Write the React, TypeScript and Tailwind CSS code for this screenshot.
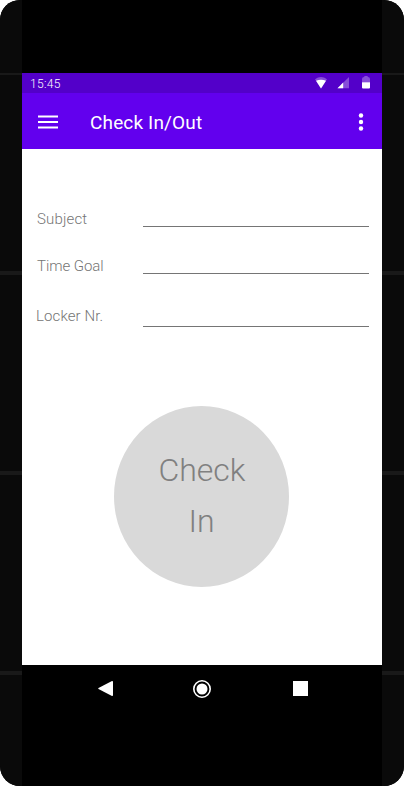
function Rail() {
  return (
    <div className="flex w-[22px] shrink-0 flex-col bg-[#0a0a0a]">
      <div className="mt-[73px] h-[2px] bg-[#191919]" />
      <div className="mt-[196px] h-[4px] bg-[#191919]" />
      <div className="mt-[196px] h-[4px] bg-[#191919]" />
      <div className="mt-[196px] h-[4px] bg-[#191919]" />
    </div>
  );
}

function StatusBar() {
  return (
    <div className="flex h-5 items-center bg-[#5300c9] pr-[11px] pl-2 text-white">
      <span className="pt-[2px] text-[12px] leading-5 font-light tracking-[0.3px]">15:45</span>
      <svg className="ml-auto" width="56" height="20" viewBox="0 0 56 20" fill="#fff">
        <path d="M0 6.2 Q6 1.6 12 6.2 L6 15.5 Z" opacity="0.3" />
        <path d="M1 7.8 Q6 5.6 11 7.8 L6 15.5 Z" />
        <path d="M22.5 15.3 L34 4 V15.3 Z" opacity="0.3" />
        <path d="M22.5 15.3 L28.2 9.6 V15.3 Z" />
        <path d="M47 9.2 V6 Q47 4 49.2 4 L49.5 3 H52.5 L52.8 4 Q55 4 55 6 V9.2 Z" opacity="0.3" />
        <path d="M47 9.2 H55 V14.5 Q55 15.5 54 15.5 H48 Q47 15.5 47 14.5 Z" />
      </svg>
    </div>
  );
}

function AppBar() {
  return (
    <div className="flex h-14 items-center bg-[#6200ee] pt-[2px] pr-[18px] pl-4 text-white">
      <svg width="20" height="14" viewBox="0 0 20 14" fill="#fff">
        <path d="M0 0.4h20v2.2H0zM0 6h20v2H0zM0 11.4h20v2.2H0z" />
      </svg>
      <h1 className="ml-8 pt-px text-[19px] leading-6 font-normal tracking-[0.15px]">Check In/Out</h1>
      <svg className="ml-auto" width="6" height="18" viewBox="0 0 6 18" fill="#fff">
        <circle cx="3" cy="2.5" r="2.2" />
        <circle cx="3" cy="9" r="2.2" />
        <circle cx="3" cy="15.5" r="2.2" />
      </svg>
    </div>
  );
}

export default function App() {
  return (
    <div className="h-[787px] w-[404px] bg-white font-['Roboto',sans-serif]">
      <div className="flex h-[786px] overflow-hidden rounded-[20px] bg-black">
        <Rail />
        <main className="flex w-[360px] flex-col pt-[73px]">
          <StatusBar />
          <AppBar />
          <section className="flex h-[516px] flex-col bg-white text-[15px] leading-5 font-light text-[#757575]">
            <div className="mt-[60px] flex h-[18px] items-end justify-between pr-[13px] pl-[15px]">
              <label className="h-[18px] tracking-[0.15px]">Subject</label>
              <div className="h-px w-[226px] bg-[#757575]" />
            </div>
            <div className="mt-[29px] flex h-[18px] items-end justify-between pr-[13px] pl-[15px]">
              <label className="h-[18px] tracking-[-0.05px]">Time Goal</label>
              <div className="h-px w-[226px] bg-[#757575]" />
            </div>
            <div className="mt-[32px] flex h-[21px] items-end justify-between pr-[13px] pl-[14px]">
              <label className="h-[21px] tracking-[0.12px]">Locker Nr.</label>
              <div className="h-px w-[226px] bg-[#757575]" />
            </div>
            <button className="mt-[79px] ml-[92px] flex h-[181px] w-[175px] flex-col items-center rounded-[50%] bg-[#d9d9d9] pt-[39px] text-[32px] leading-[51px] font-light text-[#808080]">
              <span className="ml-px">Check</span>
              <span>In</span>
            </button>
          </section>
          <nav className="flex h-12 items-start pt-[15px] pr-[74px] pl-[76px]">
            <svg className="mt-px" width="15" height="16" viewBox="0 0 15 16" fill="#fff">
              <path d="M0.5 7 L13.5 0.2 Q15 -0.2 15 1 V14 Q15 15.4 13.5 14.8 L0.5 8 Q0 7.5 0.5 7Z" />
            </svg>
            <svg className="ml-20" width="18" height="18" viewBox="0 0 18 18">
              <circle cx="9" cy="9" r="8.2" fill="none" stroke="#fff" strokeWidth="1.6" />
              <circle cx="9" cy="9" r="5.5" fill="#fff" />
            </svg>
            <div className="mt-px ml-auto size-[15px] bg-white" />
          </nav>
        </main>
        <Rail />
      </div>
    </div>
  );
}
